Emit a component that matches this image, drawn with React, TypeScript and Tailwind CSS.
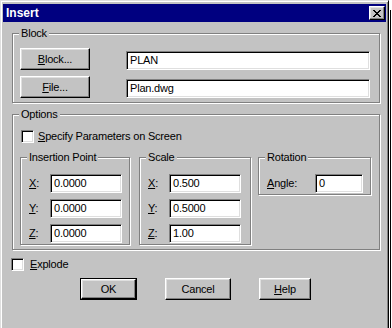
import React from "react";

const face = "bg-[#c3c3c3]";
const raised =
  "border border-t-white border-l-white border-r-black border-b-black shadow-[inset_-1px_-1px_0_#808080,inset_1px_1px_0_#dfdfdf]";
const sunken =
  "border border-t-[#808080] border-l-[#808080] border-r-white border-b-white shadow-[inset_1px_1px_0_#000,inset_-1px_-1px_0_#dfdfdf]";

function Group({ title, className = "", children }: { title: string; className?: string; children: React.ReactNode }) {
  return (
    <fieldset className={`border border-[#808080] shadow-[inset_1px_1px_0_#fff,1px_1px_0_#fff] ${className}`}>
      <legend className={`ml-[6px] px-[2px] leading-[13px] ${face}`}>{title}</legend>
      {children}
    </fieldset>
  );
}

function Btn({ className = "", def = false, children }: { className?: string; def?: boolean; children: React.ReactNode }) {
  if (def) {
    return (
      <div className={`h-[22px] border border-black ${className}`}>
        <div className={`flex h-full items-center justify-center ${raised}`}>{children}</div>
      </div>
    );
  }
  return <div className={`flex h-[22px] items-center justify-center ${raised} ${className}`}>{children}</div>;
}

function Edit({ value, className = "" }: { value: string; className?: string }) {
  return (
    <div className={`flex h-[19px] items-center bg-white pl-[3px] ${sunken} ${className}`}>
      <span>{value}</span>
    </div>
  );
}

function Check() {
  return <div className={`h-[13px] w-[13px] shrink-0 bg-white ${sunken}`} />;
}

function Field({ k, value, lw, ew }: { k: React.ReactNode; value: string; lw: string; ew: string }) {
  return (
    <div className="flex items-center">
      <span className={lw}>{k}</span>
      <Edit value={value} className={ew} />
    </div>
  );
}

function CloseGlyph() {
  return (
    <svg width="8" height="7" viewBox="0 0 8 7" shapeRendering="crispEdges">
      <path
        d="M0 0h2v1H0zM6 0h2v1H6zM1 1h2v1H1zM5 1h2v1H5zM2 2h4v1H2zM3 3h2v1H3zM2 4h4v1H2zM1 5h2v1H1zM5 5h2v1H5zM0 6h2v1H0zM6 6h2v1H6z"
        fill="#000"
      />
    </svg>
  );
}

export default function App() {
  return (
    <div className="flex h-[328px] w-[392px] overflow-hidden bg-white font-['Liberation_Sans',Arial,sans-serif] text-[11px] leading-[13px] tracking-[-0.2px] text-black">
      <div
        className={`h-[340px] w-[389px] shrink-0 border border-t-[#dfdfdf] border-l-[#dfdfdf] border-r-black border-b-black px-[2px] pt-[3px] shadow-[inset_1px_1px_0_#fff,inset_-1px_-1px_0_#808080] ${face}`}
      >
        <div className="flex h-[18px] items-center bg-[#000080] pl-[3px] pr-[1px]">
          <span className="flex-1 text-[12px] font-bold tracking-normal text-white">Insert</span>
          <div className={`flex h-[14px] w-[16px] items-center justify-center ${face} ${raised}`}>
            <CloseGlyph />
          </div>
        </div>

        <div className="flex flex-col pl-[9px] pr-[6px]">
          <Group title="Block" className="mt-[5px]">
            <div className="flex flex-col gap-[6px] pb-[4px] pl-[7px] pr-[9px] pt-[8px]">
              <div className="flex items-start">
                <Btn className="w-[70px]">
                  <span><u>B</u>lock...</span>
                </Btn>
                <Edit value="PLAN" className="ml-[36px] mt-[3px] flex-1" />
              </div>
              <div className="flex items-start">
                <Btn className="w-[70px]">
                  <span><u>F</u>ile...</span>
                </Btn>
                <Edit value="Plan.dwg" className="ml-[36px] mt-[3px] flex-1" />
              </div>
            </div>
          </Group>

          <Group title="Options" className="mt-[5px]">
            <div className="pb-[4px] pl-[7px] pr-[8px] pt-[9px]">
              <div className="ml-[1px] flex items-center">
                <Check />
                <span className="ml-[4px]"><u>S</u>pecify Parameters on Screen</span>
              </div>
              <div className="mt-[8px] flex items-start">
                <Group title="Insertion Point" className="w-[110px]">
                  <div className="flex flex-col gap-[6px] pb-[1px] pl-[8px] pt-[10px]">
                    <Field k={<><u>X</u>:</>} value="0.0000" lw="w-[21px]" ew="w-[72px]" />
                    <Field k={<><u>Y</u>:</>} value="0.0000" lw="w-[21px]" ew="w-[72px]" />
                    <Field k={<><u>Z</u>:</>} value="0.0000" lw="w-[21px]" ew="w-[72px]" />
                  </div>
                </Group>
                <Group title="Scale" className="ml-[9px] w-[112px]">
                  <div className="flex flex-col gap-[6px] pb-[1px] pl-[8px] pt-[10px]">
                    <Field k={<><u>X</u>:</>} value="0.500" lw="w-[21px]" ew="w-[72px]" />
                    <Field k={<><u>Y</u>:</>} value="0.5000" lw="w-[21px]" ew="w-[72px]" />
                    <Field k={<><u>Z</u>:</>} value="1.00" lw="w-[21px]" ew="w-[72px]" />
                  </div>
                </Group>
                <Group title="Rotation" className="ml-[7px] w-[113px]">
                  <div className="flex flex-col pb-[1px] pl-[8px] pt-[10px]">
                    <Field k={<><u>A</u>ngle:</>} value="0" lw="w-[48px]" ew="w-[48px]" />
                  </div>
                </Group>
              </div>
            </div>
          </Group>

          <div className="-ml-[1px] mt-[8px] flex items-center">
            <Check />
            <span className="ml-[6px]"><u>E</u>xplode</span>
          </div>

          <div className="mt-[7px] flex">
            <Btn def className="ml-[68px] w-[57px]">
              <span>OK</span>
            </Btn>
            <Btn className="ml-[28px] w-[66px]">
              <span>Cancel</span>
            </Btn>
            <Btn className="ml-[28px] w-[52px]">
              <span><u>H</u>elp</span>
            </Btn>
          </div>
        </div>
      </div>
      <div className="flex w-[3px] pl-[1px]">
        <div className="mt-[10px] h-full border-l border-black" />
      </div>
    </div>
  );
}
